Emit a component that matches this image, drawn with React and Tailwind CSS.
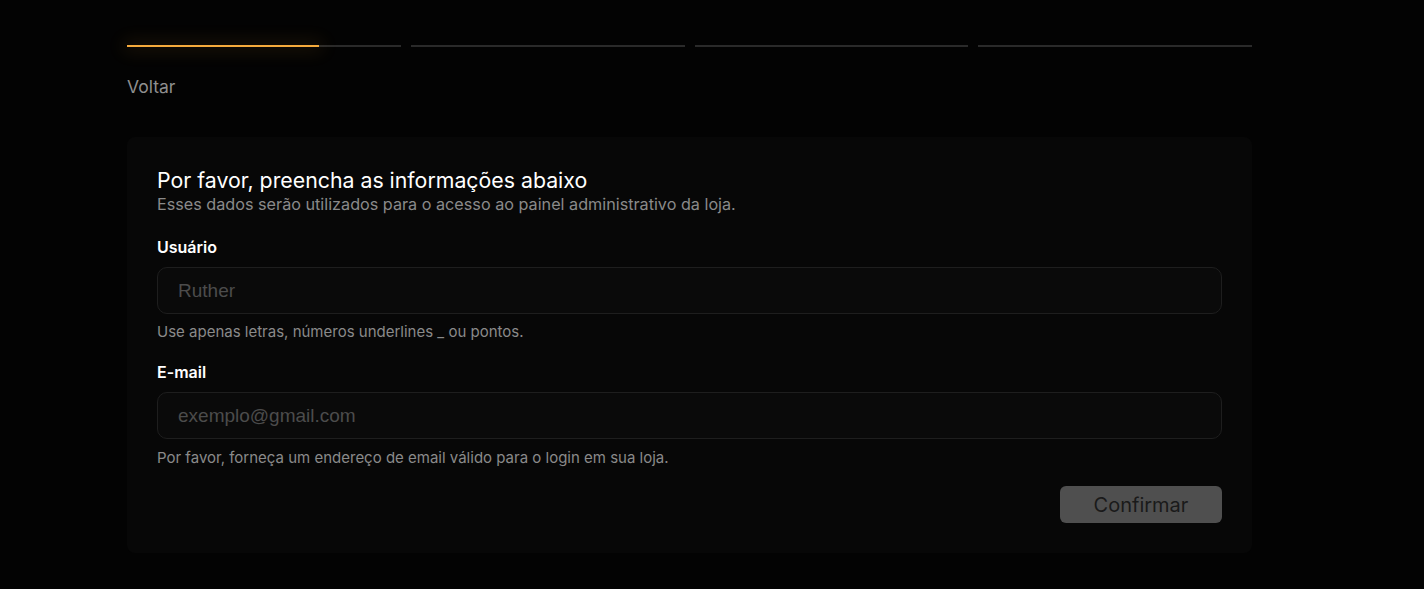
import { useState } from "react";

const steps = [0.7, 0, 0, 0];

export default function App() {
  const [form, setForm] = useState({ username: "", email: "" });

  const handleChange = (e) => {
    const { name, value } = e.target;
    setForm((prev) => ({ ...prev, [name]: value }));
  };

  return (
    <div className="min-h-screen bg-[#030303] font-['Inter',sans-serif]">
      <main className="w-[1125px] ml-[127px] pt-[45px]">
        <div className="flex gap-[10px]">
          {steps.map((p, i) => (
            <div key={i} className="relative flex-1 h-[2px] bg-[#2a2a2a]">
              {p > 0 && (
                <div
                  className="absolute left-0 top-0 h-[2px] bg-[#f5aa3c] shadow-[0_0_18px_4px_rgba(245,170,60,0.12)]"
                  style={{ width: `${p * 100}%` }}
                />
              )}
            </div>
          ))}
        </div>

        <button className="mt-[29px] text-[17.5px] leading-[22px] text-[#8f8f8f]">Voltar</button>

        <div className="mt-[38px] rounded-[8px] bg-[#070707] px-[30px] pt-[30px] pb-[30px]">
          <h1 className="text-[21.3px] leading-[26px] text-white">Por favor, preencha as informações abaixo</h1>
          <p className="text-[16.2px] leading-[22px] text-[#8a8a8a]">
            Esses dados serão utilizados para o acesso ao painel administrativo da loja.
          </p>

          <label className="block mt-[22px] text-[16px] leading-[20px] font-semibold text-white">Usuário</label>
          <input
            name="username"
            value={form.username}
            onChange={handleChange}
            placeholder="Ruther"
            className="mt-[10px] w-full h-[47px] rounded-[10px] border border-[#1e1e1e] bg-[#0a0a0a] px-[20px] text-[19px] text-white placeholder:text-[#4c4c4c] font-['Liberation_Sans',Arial,sans-serif] outline-none"
          />
          <p className="mt-[8px] text-[15px] leading-[20px] text-[#8a8a8a]">Use apenas letras, números underlines _ ou pontos.</p>

          <label className="block mt-[20px] text-[16px] leading-[20px] font-semibold text-white">E-mail</label>
          <input
            name="email"
            value={form.email}
            onChange={handleChange}
            placeholder="exemplo@gmail.com"
            className="mt-[10px] w-full h-[47px] rounded-[10px] border border-[#1e1e1e] bg-[#0a0a0a] px-[20px] text-[19px] text-white placeholder:text-[#4c4c4c] font-['Liberation_Sans',Arial,sans-serif] outline-none"
          />
          <p className="mt-[9px] text-[15px] leading-[20px] text-[#8a8a8a]">
            Por favor, forneça um endereço de email válido para o login em sua loja.
          </p>

          <div className="flex justify-end mt-[18px]">
            <button className="w-[162px] h-[37px] rounded-[6px] bg-[#4f4f4f] text-[20px] text-[#1a1a1a]">Confirmar</button>
          </div>
        </div>
      </main>
    </div>
  );
}
